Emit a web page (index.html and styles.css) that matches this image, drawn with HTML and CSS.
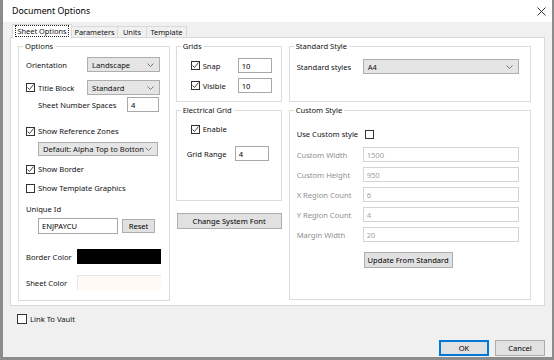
FILE: index.html
```html
<!DOCTYPE html>
<html lang="en">
<head>
  <meta charset="UTF-8" />
  <title>Document Options</title>
  <link rel="stylesheet" href="styles.css">
</head>
<body>
<div class="window">
  <div class="titlebar">
    <span class="title">Document Options</span>
    <svg class="close" width="9" height="9" viewBox="0 0 9 9"><path d="M0.5 0.5 L8.5 8.5 M8.5 0.5 L0.5 8.5" stroke="#333" stroke-width="1" fill="none"/></svg>
  </div>

  <div class="content">
    <div class="tabs">
      <div class="tab active" style="width:60px"><span class="focus">Sheet Options</span></div>
      <div class="tab" style="width:46px">Parameters</div>
      <div class="tab" style="width:29px">Units</div>
      <div class="tab" style="width:40px">Template</div>
    </div>

    <div class="tabpage">
      <!-- left column -->
      <fieldset class="group options">
        <legend>Options</legend>
        <div class="row r1">
          <span class="lbl w61">Orientation</span>
          <div class="combo w73">Landscape<svg class="chev" width="7" height="4" viewBox="0 0 7 4"><path d="M0.5 0.5 L3.5 3.5 L6.5 0.5" stroke="#777" fill="none"/></svg></div>
        </div>
        <div class="row r2">
          <span class="lbl w61"><span class="check on"><svg width="9" height="9" viewBox="0 0 9 9"><path d="M1.5 4.5 L3.5 6.5 L7.5 1.5" stroke="#444" fill="none"/></svg></span>Title Block</span>
          <div class="combo w73">Standard<svg class="chev" width="7" height="4" viewBox="0 0 7 4"><path d="M0.5 0.5 L3.5 3.5 L6.5 0.5" stroke="#777" fill="none"/></svg></div>
        </div>
        <div class="row r3 indent">
          <span class="lbl w89">Sheet Number Spaces</span>
          <input class="field w32" value="4">
        </div>
        <div class="row r4 small">
          <span class="check on"><svg width="9" height="9" viewBox="0 0 9 9"><path d="M1.5 4.5 L3.5 6.5 L7.5 1.5" stroke="#444" fill="none"/></svg></span>Show Reference Zones
        </div>
        <div class="row r5 indent">
          <div class="combo w120">Default: Alpha Top to Botton<svg class="chev" width="7" height="4" viewBox="0 0 7 4"><path d="M0.5 0.5 L3.5 3.5 L6.5 0.5" stroke="#777" fill="none"/></svg></div>
        </div>
        <div class="row r6 small">
          <span class="check on"><svg width="9" height="9" viewBox="0 0 9 9"><path d="M1.5 4.5 L3.5 6.5 L7.5 1.5" stroke="#444" fill="none"/></svg></span>Show Border
        </div>
        <div class="row r7 small">
          <span class="check"></span>Show Template Graphics
        </div>
        <div class="row r8 small">Unique Id</div>
        <div class="row r9 indent">
          <input class="field w80 tall" value="ENJPAYCU">
          <button class="btn reset">Reset</button>
        </div>
        <div class="row r10">
          <span class="lbl w51">Border Color</span>
          <div class="swatch black"></div>
        </div>
        <div class="row r11">
          <span class="lbl w51">Sheet Color</span>
          <div class="swatch cream"></div>
        </div>
      </fieldset>

      <!-- middle column -->
      <div class="column mid">
        <fieldset class="group grids">
          <legend>Grids</legend>
          <div class="row g1">
            <span class="lbl w54 inset"><span class="check on"><svg width="9" height="9" viewBox="0 0 9 9"><path d="M1.5 4.5 L3.5 6.5 L7.5 1.5" stroke="#444" fill="none"/></svg></span>Snap</span>
            <input class="field w34" value="10">
          </div>
          <div class="row g2">
            <span class="lbl w54 inset"><span class="check on"><svg width="9" height="9" viewBox="0 0 9 9"><path d="M1.5 4.5 L3.5 6.5 L7.5 1.5" stroke="#444" fill="none"/></svg></span>Visible</span>
            <input class="field w34" value="10">
          </div>
        </fieldset>
        <fieldset class="group electrical">
          <legend>Electrical Grid</legend>
          <div class="row e1 small inset">
            <span class="check on"><svg width="9" height="9" viewBox="0 0 9 9"><path d="M1.5 4.5 L3.5 6.5 L7.5 1.5" stroke="#444" fill="none"/></svg></span>Enable
          </div>
          <div class="row e2">
            <span class="lbl w49 nudge">Grid Range</span>
            <input class="field w34" value="4">
          </div>
        </fieldset>
        <button class="btn font">Change System Font</button>
      </div>

      <!-- right column -->
      <div class="column right">
        <fieldset class="group standard">
          <legend>Standard Style</legend>
          <div class="row s1">
            <span class="lbl w66">Standard styles</span>
            <div class="combo w156">A4<svg class="chev" width="7" height="4" viewBox="0 0 7 4"><path d="M0.5 0.5 L3.5 3.5 L6.5 0.5" stroke="#777" fill="none"/></svg></div>
          </div>
        </fieldset>
        <fieldset class="group custom">
          <legend>Custom Style</legend>
          <div class="row c0 small">
            <span class="lbl w68">Use Custom style</span><span class="check"></span>
          </div>
          <div class="row c1 disabled">
            <span class="lbl w66">Custom Width</span>
            <input class="field w156" value="1500" disabled>
          </div>
          <div class="row c2 disabled">
            <span class="lbl w66">Custom Height</span>
            <input class="field w156" value="950" disabled>
          </div>
          <div class="row c2 disabled">
            <span class="lbl w66">X Region Count</span>
            <input class="field w156" value="6" disabled>
          </div>
          <div class="row c2 disabled">
            <span class="lbl w66">Y Region Count</span>
            <input class="field w156" value="4" disabled>
          </div>
          <div class="row c2 disabled">
            <span class="lbl w66">Margin Width</span>
            <input class="field w156" value="20" disabled>
          </div>
          <div class="row c3">
            <button class="btn update">Update From Standard</button>
          </div>
        </fieldset>
      </div>
    </div>

    <div class="vault">
      <span class="check big"></span>Link To Vault
    </div>

    <div class="actions">
      <button class="btn dlg default">OK</button>
      <button class="btn dlg">Cancel</button>
    </div>
  </div>
</div>
</body>
</html>
```

FILE: styles.css
```css
* {
  box-sizing: border-box;
}
body {
  margin: 0;
  padding: 0;
  font-family: 'Noto Sans', 'Open Sans', sans-serif;
  font-size: 7.6px;
  color: #111;
  background: #f0f0f0;
}
.window {
  width: 554px;
  height: 360px;
  border-left: 3px solid #8c8c8c;
  border-right: 2px solid #8c8c8c;
  border-bottom: 3px solid #8c8c8c;
  background: #f0f0f0;
  display: flex;
  flex-direction: column;
}
.titlebar {
  height: 22px;
  background: #fff;
  display: flex;
  align-items: center;
  justify-content: space-between;
  padding: 0 6px 0 9px;
}
.title {
  font-size: 8.8px;
  color: #000;
}
.content {
  flex: 1;
  padding: 2px 7px 0 7px;
}

/* tabs */
.tabs {
  display: flex;
  align-items: flex-end;
  height: 13px;
  margin-left: 2px;
}
.tab {
  height: 11px;
  line-height: 10px;
  text-align: center;
  border: 1px solid #d9d9d9;
  border-bottom: none;
  border-left: none;
  background: #f0f0f0;
  font-size: 7.4px;
}
.tab.active {
  height: 14px;
  margin-bottom: -1px;
  position: relative;
  background: #fff;
  border-left: 1px solid #d9d9d9;
  padding-top: 1px;
}
.focus {
  display: inline-block;
  outline: 1px dotted #222;
  padding: 0 1px;
  line-height: 10px;
}
.tabpage {
  height: 269px;
  background: #fff;
  border: 1px solid #d9d9d9;
  display: flex;
  gap: 6px;
  padding: 3px 13px 4px 7px;
}

/* group boxes */
.group {
  margin: 0;
  padding: 0 8px 0 7px;
  border: 1px solid #dcdcdc;
  min-width: 0;
}
.group legend {
  padding: 0 2px;
  margin-left: -3px;
  line-height: 11px;
}
.options {
  width: 152px;
}
.column {
  display: flex;
  flex-direction: column;
}
.mid {
  width: 106px;
}
.right {
  width: 243px;
  margin-left: 1px;
}
.grids,
.standard {
  height: 61px;
}
.electrical {
  height: 96px;
  margin-top: 3px;
}
.custom {
  flex: 1;
  margin-top: 3px;
  margin-bottom: 1px;
}

/* rows */
.row {
  display: flex;
  align-items: center;
  height: 15px;
  white-space: nowrap;
}
.row.small {
  height: 12px;
}
.indent {
  padding-left: 12px;
}
.inset {
  padding-left: 7px;
}
.nudge {
  padding-left: 3px;
}
.r1 { margin-top: 5px; }
.r2 { margin-top: 8px; }
.r3 { margin-top: 2px; }
.r4 { margin-top: 13px; }
.r5 { margin-top: 5px; height: 14px; }
.r6 { margin-top: 7px; }
.r7 { margin-top: 7px; }
.r8 { margin-top: 9px; }
.r9 { margin-top: 3px; height: 16px; gap: 4px; }
.r10 { margin-top: 15px; }
.r11 { margin-top: 11px; }
.g1 { margin-top: 6px; }
.g2 { margin-top: 5px; }
.e1 { margin-top: 7px; }
.e2 { margin-top: 11px; }
.s1 { margin-top: 7px; }
.c0 { margin-top: 12px; }
.c1 { margin-top: 7px; }
.c2 { margin-top: 5px; }
.c3 { margin-top: 10px; height: 16px; padding-left: 67px; }

.lbl {
  display: flex;
  align-items: center;
  flex: none;
}
.w49 { width: 51px; }
.w51 { width: 51px; }
.w54 { width: 54px; }
.w61 { width: 61px; }
.w66 { width: 66px; }
.w68 { width: 68px; }
.w89 { width: 89px; }
.w32 { width: 32px; }
.w34 { width: 34px; }
.w73 { width: 73px; }
.w80 { width: 80px; }
.w120 { width: 120px; }
.w156 { width: 156px; }

/* controls */
.check {
  display: inline-block;
  width: 9px;
  height: 9px;
  border: 1px solid #333;
  background: #fff;
  margin-right: 3px;
  flex: none;
  position: relative;
}
.check svg {
  display: block;
  margin: -1px;
}
.check.big {
  width: 10px;
  height: 10px;
}
.combo {
  height: 100%;
  background: #e5e5e5;
  border: 1px solid #adadad;
  display: flex;
  align-items: center;
  justify-content: space-between;
  padding: 0 5px 0 4px;
  flex: none;
}
.chev {
  flex: none;
}
.field {
  height: 100%;
  font: inherit;
  color: #000;
  border: 1px solid #a8a8a8;
  background: #fff;
  padding: 0 3px;
  margin: 0;
  flex: none;
}
.field.tall {
  height: 16px;
}
.disabled .lbl {
  color: #8f8f8f;
}
.field:disabled {
  border-color: #d4d4d4;
  color: #a0a0a0;
  background: #fff;
}
.swatch {
  width: 84px;
  height: 15px;
  flex: none;
}
.swatch.black {
  background: #000;
}
.swatch.cream {
  background: #fffaf5;
  border-top: 1px solid #e6e6e6;
  border-left: 1px solid #e6e6e6;
}
.btn {
  font: inherit;
  color: #000;
  background: #e1e1e1;
  border: 1px solid #adadad;
  padding: 0;
  margin: 0;
}
.reset {
  width: 33px;
  height: 14px;
}
.font {
  width: 105px;
  height: 16px;
  margin-top: 12px;
  margin-left: 1px;
}
.update {
  width: 89px;
  height: 16px;
}

/* bottom */
.vault {
  display: flex;
  align-items: center;
  height: 11px;
  margin-top: 7px;
  padding-left: 7px;
}
.actions {
  display: flex;
  justify-content: flex-end;
  gap: 6px;
  margin-top: 16px;
  padding-right: 0;
}
.dlg {
  width: 50px;
  height: 16px;
}
.dlg.default {
  border: 1px solid #0078d7;
  box-shadow: inset 0 0 0 1px #0078d7;
}
```
